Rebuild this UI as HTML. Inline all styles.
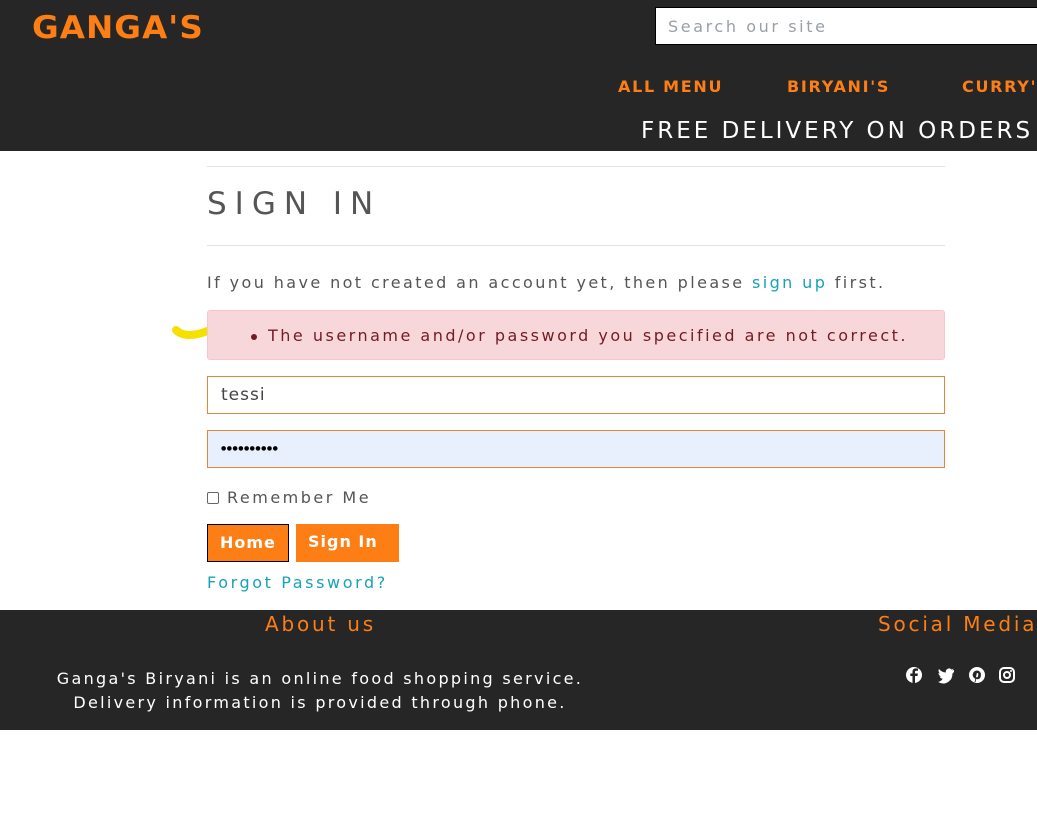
<!DOCTYPE html>
<html><head><style>
*{box-sizing:border-box;margin:0;padding:0}
body{width:1037px;height:814px;background:#fff;font-family:"DejaVu Sans","Liberation Sans",sans-serif;position:relative;overflow:hidden;color:#555}
.hdr{position:absolute;left:0;top:0;width:1037px;height:151px;background:#262626}
.logo{position:absolute;left:32px;top:10px;color:#fd7e14;font:bold 31px "DejaVu Sans",sans-serif;letter-spacing:1px;transform:scaleX(1.05);transform-origin:left}
.search{position:absolute;left:655px;top:7px;width:390px;height:38px;background:#fff;border:1px solid #000;color:#9aa0a6;font-size:16px;padding:9px 12px;letter-spacing:2.6px}
.nav{position:absolute;top:77px;color:#fd7e14;font-weight:bold;font-size:16px;letter-spacing:1.7px}
.free{position:absolute;left:641px;top:118px;color:#fff;font-size:23px;white-space:nowrap;letter-spacing:3px}
.a{position:absolute;left:207px}
hr{position:absolute;left:207px;width:738px;border:0;border-top:1px solid #e3e3e3}
h1{position:absolute;left:207px;top:186px;font-size:31px;font-weight:normal;color:#555;letter-spacing:8px}
.p{top:273px;font-size:16px;letter-spacing:2.4px;white-space:nowrap}
.p b{color:#17a2b8;font-weight:normal}
.alert{position:absolute;left:207px;top:310px;width:738px;height:50px;background:#f8d7da;border:1px solid #f5c6cb;border-radius:3px;color:#721c24;font-size:16px;letter-spacing:2.5px;padding:15px 0 0 60px;white-space:nowrap}
.alert:before{content:"";position:absolute;left:43px;top:23px;width:6px;height:6px;border-radius:50%;background:#721c24}
.in{position:absolute;left:207px;width:738px;height:38px;border:1px solid #e08a3a;font-size:17px;padding:8px 13px;color:#444;letter-spacing:1px}
.cb{top:488px;font-size:16px;letter-spacing:2.5px;display:flex;align-items:center}
.cb span{display:inline-block;width:12px;height:12px;border:1px solid #666;border-radius:2px;margin-right:8px}
.btn{position:absolute;top:524px;height:38px;line-height:36px;background:#fd7e14;color:#fff;font-size:16px;font-weight:bold;padding:0 12px;letter-spacing:1px}
.ft{position:absolute;left:0;top:610px;width:1037px;height:120px;background:#262626}
.ft h3{position:absolute;top:2px;color:#fd7e14;font-weight:normal;font-size:20px;letter-spacing:2.8px;white-space:nowrap}
.ft p{position:absolute;left:0;width:640px;text-align:center;color:#fff;font-size:16px;letter-spacing:2.3px;line-height:24px;top:57px;white-space:nowrap}
</style></head><body>
<div class="hdr">
<div class="logo">GANGA'S</div>
<div class="search">Search our site</div>
<div class="nav" style="left:618px">ALL MENU</div>
<div class="nav" style="left:787px">BIRYANI'S</div>
<div class="nav" style="left:962px">CURRY'S</div>
<div class="free">FREE DELIVERY ON ORDERS</div>
</div>
<hr style="top:166px">
<h1>SIGN IN</h1>
<hr style="top:245px">
<div class="a p">If you have not created an account yet, then please <b>sign up</b> first.</div>
<svg style="position:absolute;left:172px;top:322px" width="44" height="22"><path d="M4 8 Q14 18 38 8" stroke="#f5e000" stroke-width="8" fill="none" stroke-linecap="round"/></svg>
<div class="alert">The username and/or password you specified are not correct.</div>
<div class="in" style="top:376px">tessi</div>
<div class="in" style="top:430px;background:#e8f0fe;font-size:6px;padding-top:14px;letter-spacing:0.5px;color:#000">●●●●●●●●●●</div>
<div class="a cb"><span></span>Remember Me</div>
<div class="btn" style="left:207px;width:82px;border:1px solid #000">Home</div>
<div class="btn" style="left:296px;width:103px">Sign In</div>
<div class="a" style="top:573px;color:#17a2b8;font-size:16px;letter-spacing:2.6px">Forgot Password?</div>
<div class="ft">
<h3 style="left:265px">About us</h3>
<h3 style="left:878px">Social Media</h3>
<p>Ganga's Biryani is an online food shopping service.<br>Delivery information is provided through phone.</p>
<svg style="position:absolute;left:906px;top:57px" width="110" height="18" fill="#fff">
<circle cx="8" cy="8" r="8"/><path d="M9 16V9h2.5l.4-2.5H9V5c0-.8.3-1.3 1.4-1.3H12V1.5A18 18 0 0 0 9.8 1.4C7.7 1.4 6.5 2.7 6.5 4.8v1.7H4.3V9h2.2v7z" fill="#262626"/>
<path d="M48 3c-.6.3-1.2.4-1.9.5.7-.4 1.2-1 1.4-1.8-.6.4-1.3.6-2 .8a3.3 3.3 0 0 0-5.6 3A9.3 9.3 0 0 1 33 2c-.9 1.5-.4 3.4 1 4.4-.5 0-1-.2-1.5-.4 0 1.6 1.1 3 2.6 3.3-.5.1-1 .2-1.5.1.4 1.3 1.7 2.3 3.1 2.3A6.6 6.6 0 0 1 32 14.9 9.3 9.3 0 0 0 46.4 6.6c.6-.5 1.2-1 1.6-1.7z"/>
<circle cx="71" cy="8" r="8"/><path d="M71 3.5a4.3 4.3 0 0 0-1.6 8.3l-.9 3.4h.9l.9-3.3c.3.2.8.4 1.3.4 2 0 3.3-1.8 3.3-4a4 4 0 0 0-3.9-4.8zm.1 6.9c-.6 0-1-.3-1.1-.6l.6-2.3c-.2-.6.2-1.5.7-1.5 1 0 1 .9 1 1.4 0 1.5-.6 3-1.2 3z" fill="#262626"/>
<rect x="94" y="1" width="14" height="14" rx="4" fill="none" stroke="#fff" stroke-width="2"/><circle cx="101" cy="8" r="3" fill="none" stroke="#fff" stroke-width="2"/><circle cx="105" cy="4" r="1"/>
</svg>
</div>
</body></html>
